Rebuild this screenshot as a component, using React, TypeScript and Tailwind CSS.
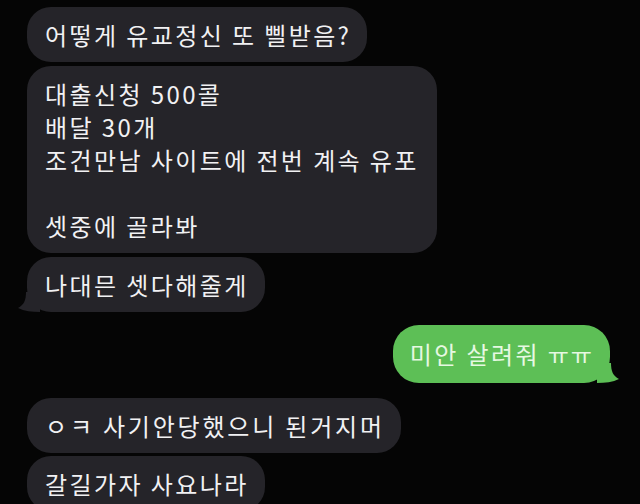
import React from "react";

const font = { fontFamily: '"Noto Sans CJK KR", "Noto Sans", sans-serif' };

function TailLeft() {
  return (
    <svg className="absolute -left-[9px] bottom-0" width="22" height="20" viewBox="0 0 22 20">
      <path d="M22 0 V20 C14 20 6 19 0 16 C6 13 8 8 8 0 Z" fill="#252429" />
    </svg>
  );
}

function TailRight() {
  return (
    <svg className="absolute -right-[9px] bottom-0" width="22" height="20" viewBox="0 0 22 20">
      <path d="M0 0 V20 C8 20 16 19 22 16 C16 13 14 8 14 0 Z" fill="#5dbf56" />
    </svg>
  );
}

function Gray({ children, tail, className = "" }: { children: React.ReactNode; tail?: boolean; className?: string }) {
  return (
    <div className={`relative bg-[#252429] text-[#f1f1f3] rounded-[24px] pl-[18px] pr-[16px] py-[11px] text-[24px] leading-[33px] tracking-[2.4px] ${className}`}>
      {children}
      {tail && <TailLeft />}
    </div>
  );
}

export default function App() {
  return (
    <div className="w-[640px] h-[504px] overflow-hidden bg-[#050505]" style={font}>
      <div className="flex flex-col items-start pl-[27px] pr-[30px] pt-[7px]">
        <Gray>어떻게 유교정신 또 삘받음?</Gray>
        <Gray className="mt-[4px] rounded-[20px] w-[410px]">
          <div>대출신청 500콜</div>
          <div>배달 30개</div>
          <div>조건만남 사이트에 전번 계속 유포</div>
          <div>&nbsp;</div>
          <div>셋중에 골라봐</div>
        </Gray>
        <Gray tail className="mt-[4px]">나대믄 셋다해줄게</Gray>

        <div className="self-end relative mt-[13px] bg-[#5dbf56] text-[#e6f8e2] rounded-[26px] pl-[17px] pr-[16px] py-[12px] text-[24px] leading-[33px] tracking-[2.4px]">
          미안 살려줘 <span className="text-[23px] tracking-[2px]">ㅠㅠ</span>
          <TailRight />
        </div>

        <Gray className="mt-[15px] tracking-[2.8px]">ㅇㅋ 사기안당했으니 된거지머</Gray>
        <Gray className="mt-[3px]">갈길가자 사요나라</Gray>
      </div>
    </div>
  );
}
